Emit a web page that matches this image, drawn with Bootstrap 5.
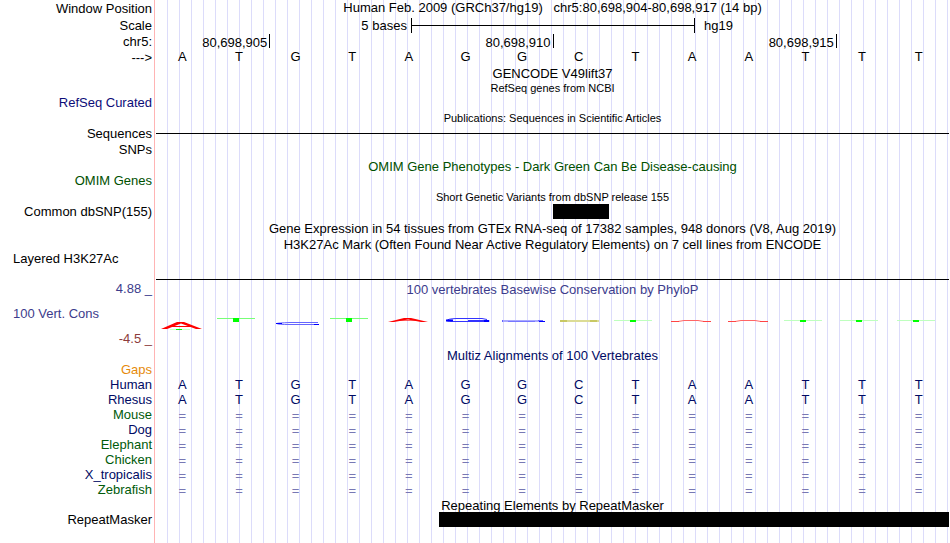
<!DOCTYPE html>
<html lang="en">
<head>
  <meta charset="UTF-8">
  <title>Genome Browser - chr5:80,698,904-80,698,917</title>
  <meta name="viewport" content="width=device-width, initial-scale=1">
  <link href="https://cdn.jsdelivr.net/npm/bootstrap@5.3.2/dist/css/bootstrap.min.css" rel="stylesheet">
  <style>
    body {
      font-family: "Liberation Sans", Arial, sans-serif;
      font-size: 13px;
      line-height: 15px;
      color: #000;
    }
    .track { min-height: 15px; }
    .track-mid { min-height: 16px; }
    .track-tall { min-height: 17px; }
    .track-wiggle { min-height: 33px; }
    .track-signal { min-height: 29px; }
    .track-label {
      width: 155px;
      padding-right: 2px;
      border-right: 1px solid #ffb4b4;
      white-space: nowrap;
    }
    .label-start { padding-left: 13px; }
    /* one guide line every 12px */
    .track-data {
      padding: 0 1px;
      background: linear-gradient(to right, transparent 11px, #dcdcfa 11px) 0 0 / 12px 100% content-box;
      white-space: nowrap;
    }
    .track-title { height: 15px; line-height: 17px; }
    .fine { font-size: 11px; }
    .bases, .halves { display: grid; grid-template-columns: repeat(14, minmax(0, 1fr)); }
    .halves { grid-template-columns: repeat(28, minmax(0, 1fr)); }
    .bases > span { padding-right: 4px; text-align: center; }
    .scale-text { grid-column: 1 / 10; }
    .scale-bar {
      grid-column: 10 / 20;
      height: 15px;
      margin-right: -1px;
      border: solid #000;
      border-width: 0 1px;
      background: linear-gradient(#000, #000) center / 100% 1px no-repeat;
    }
    .scale-db { grid-column: 20 / -1; padding-left: 10px; }
    .ruler > span {
      height: 14px;
      margin-right: -1px;
      padding-right: 2px;
      border-right: 1px solid #000;
      text-align: right;
      line-height: 17px;
    }
    .tick-a { grid-column: 1 / 3; }
    .tick-b { grid-column: 3 / 8; }
    .tick-c { grid-column: 8 / 13; }
    .item { height: 15px; background: #000; }
    .item-snp { grid-column: 8 / 9; }
    .item-rmsk { grid-column: 6 / -1; }
    .baseline { height: 1px; background: #000; }
    .c-refseq { color: #0c0c78; }
    .c-omim { color: #005000; }
    .c-cons { color: #3c3c8c; }
    .c-neg { color: #8c3c3c; }
    .c-gaps { color: #e68a0a; }
    .c-navy { color: #000a64; }
    .c-green { color: #005a0a; }
    .c-gapmark { height: 15px; color: #7878b4; line-height: 17px; }
  </style>
</head>
<body class="bg-white">

<main id="tracks" class="d-flex flex-column min-vh-100 overflow-hidden"></main>

<template id="scale">
  <div class="halves">
    <span class="scale-text text-end pe-1">5 bases</span>
    <span class="scale-bar"></span>
    <span class="scale-db">hg19</span>
  </div>
</template>

<template id="ruler">
  <div class="bases ruler">
    <span class="tick-a">80,698,905</span>
    <span class="tick-b">80,698,910</span>
    <span class="tick-c">80,698,915</span>
  </div>
</template>

<template id="logo">
  <svg class="d-block w-100" height="33" viewBox="156 297 793 33" preserveAspectRatio="none" fill="none" aria-label="Basewise conservation">
    <g fill="#f00">
      <path d="M161 329L177 322H184L202 329H196L181 323.5L167 329Z"/>
      <path d="M170 326H191V327H170Z"/>
      <path d="M388 322L404 318H411L428 322H421L408 319.5L394 322Z"/>
      <path d="M400 320H416V321H400Z" opacity=".6"/>
    </g>
    <path d="M170 329.500H190" stroke="#ccffcc"/>
    <path d="M176 329.500H182" stroke="#0f0"/>
    <path d="M217 318.500H255M330 318.500H368" stroke="#7f7"/>
    <path d="M233 318H239V322H233ZM346 318H352V322H346Z" fill="#0f0"/>
    <path d="M318 322.500H290Q277 323 277 323.500Q277 324.500 290 324.500H319" stroke="#66f"/>
    <path d="M314 324.500H319M276 323.500H282" stroke="#00f"/>
    <path d="M487 319.500L482 318.500H456Q447 319 447 320.500Q447 321.500 456 321.500H489V320.500H468" stroke="#33f"/>
    <path d="M446 320.500H453M484 321H489" stroke="#00f" stroke-width="2"/>
    <path d="M502 321H508M535 321H543" stroke="#66f" stroke-width="2"/>
    <path d="M503 321.500H545M503 320.500H538" stroke="#aaf"/>
    <path d="M508 321.500H535" stroke="#77f"/>
    <path d="M539 321.500H545" stroke="#00f"/>
    <path d="M560 321H599" stroke="#dcdc96" stroke-width="2"/>
    <path d="M560 321H567M590 321H597" stroke="#c8c864" stroke-width="2"/>
    <path d="M614 320.500H652M784 320.500H822M840 320.500H878M897 320.500H935" stroke="#beffbe"/>
    <path d="M630 320H636V322H630ZM800 320H806V322H800ZM856 320H862V322H856ZM913 320H919V322H913Z" fill="#0f0"/>
    <path d="M678 321.500L684 320.500H698L704 321.500M735 321.500L741 320.500H755L761 321.500" stroke="#f66"/>
    <path d="M671 321.500H679M703 321.500H711M728 321.500H736M760 321.500H768" stroke="#f44"/>
  </svg>
</template>

<script>
const sequence = "ATGTAGGCTAATTT";

function bases(color) {
  return `<div class="bases ${color}">${[...sequence].map(b => `<span>${b}</span>`).join("")}</div>`;
}

function unaligned() {
  return `<div class="bases c-gapmark">${"<span>=</span>".repeat(sequence.length)}</div>`;
}

function title(text, css = "") {
  return `<div class="track-title text-center ${css}">${text}</div>`;
}

function part(id) {
  return document.getElementById(id).innerHTML;
}

const line = `<div class="baseline"></div>`;

const tracks = [
  { label: "Window Position", size: "tall", top: true, data: `<div class="text-center">Human Feb. 2009 (GRCh37/hg19) &nbsp; chr5:80,698,904-80,698,917 (14 bp)</div>` },
  { label: "Scale", size: "tall", data: part("scale") },
  { label: "chr5:", top: true, data: part("ruler") },
  { label: "--->", size: "mid", top: true, data: bases("") },
  { data: title("GENCODE V49lift37") },
  { data: title("RefSeq genes from NCBI", "fine") },
  { label: "RefSeq Curated", color: "c-refseq" },
  { data: title("Publications: Sequences in Scientific Articles", "fine") },
  { label: "Sequences", size: "mid", data: line },
  { label: "SNPs", size: "mid" },
  { size: "mid", data: title("OMIM Gene Phenotypes - Dark Green Can Be Disease-causing", "c-omim") },
  { label: "OMIM Genes", color: "c-omim" },
  { size: "mid", data: title("Short Genetic Variants from dbSNP release 155", "fine") },
  { label: "Common dbSNP(155)", data: `<div class="bases"><div class="item item-snp"></div></div>` },
  { size: "tall", data: title("Gene Expression in 54 tissues from GTEx RNA-seq of 17382 samples, 948 donors (V8, Aug 2019)") },
  { data: title("H3K27Ac Mark (Often Found Near Active Regulatory Elements) on 7 cell lines from ENCODE") },
  { label: "Layered H3K27Ac", start: true, size: "signal", bottom: true, data: line },
  { label: "4.88 _", color: "c-cons", size: "tall", data: title("100 vertebrates Basewise Conservation by PhyloP", "c-cons") },
  { label: "100 Vert. Cons", color: "c-cons", start: true, size: "wiggle", data: part("logo") },
  { label: "-4.5 _", color: "c-neg", size: "tall" },
  { data: title("Multiz Alignments of 100 Vertebrates", "c-navy") },
  { label: "Gaps", color: "c-gaps" },
  { label: "Human", color: "c-navy", data: bases("c-navy") },
  { label: "Rhesus", color: "c-navy", data: bases("c-navy") },
  { label: "Mouse", color: "c-green", data: unaligned() },
  { label: "Dog", color: "c-navy", data: unaligned() },
  { label: "Elephant", color: "c-green", data: unaligned() },
  { label: "Chicken", color: "c-green", data: unaligned() },
  { label: "X_tropicalis", color: "c-navy", data: unaligned() },
  { label: "Zebrafish", color: "c-green", data: unaligned() },
  { data: title("Repeating Elements by RepeatMasker") },
  { label: "RepeatMasker", data: `<div class="bases"><div class="item item-rmsk"></div></div>` },
  { fill: true }
];

function renderTrack(t) {
  const size = t.fill ? "flex-grow-1" : t.size ? `track-${t.size}` : "track";
  const side = t.start ? "label-start" : "justify-content-end";
  const labelAlign = t.bottom ? "align-items-start" : "align-items-center";
  const dataAlign = t.top ? "justify-content-start" : t.bottom ? "justify-content-end" : "justify-content-center";
  return `
    <div class="d-flex ${size}">
      <div class="track-label d-flex flex-shrink-0 ${side} ${labelAlign} ${t.color || ""}">${t.label || ""}</div>
      <div class="track-data d-flex flex-column flex-grow-1 ${dataAlign}">${t.data || ""}</div>
    </div>`;
}

document.getElementById("tracks").innerHTML = tracks.map(renderTrack).join("");
</script>

<script src="https://cdn.jsdelivr.net/npm/bootstrap@5.3.2/dist/js/bootstrap.bundle.min.js"></script>
</body>
</html>
